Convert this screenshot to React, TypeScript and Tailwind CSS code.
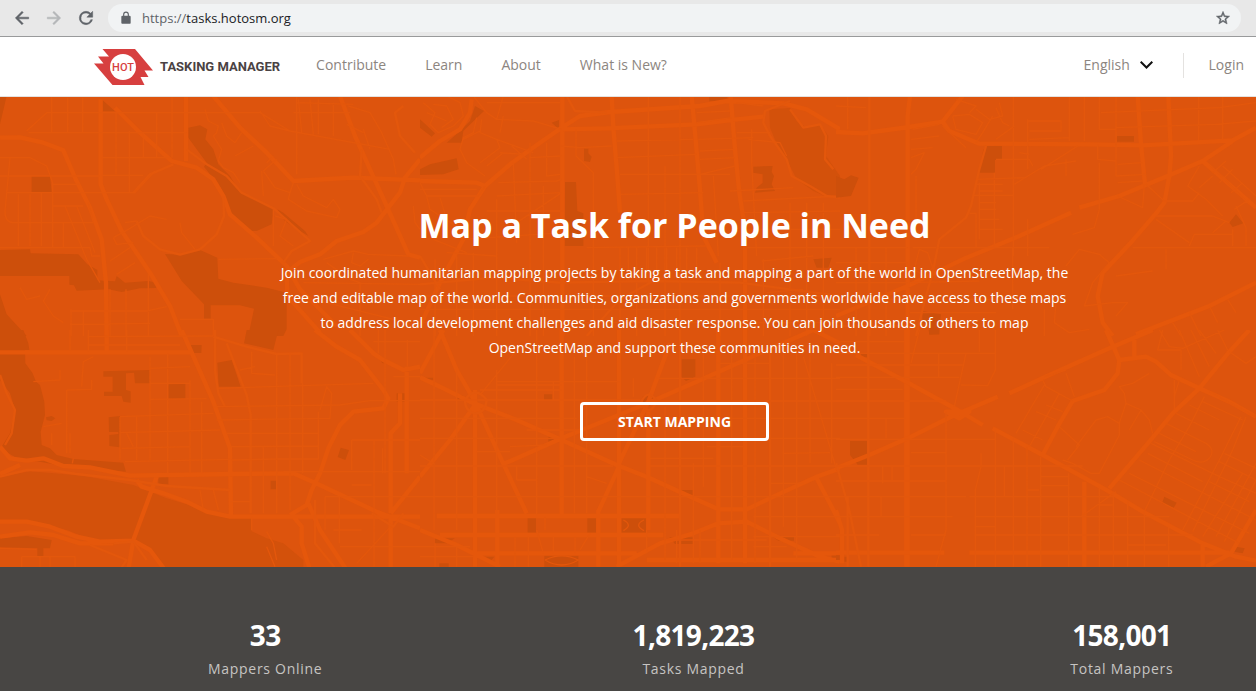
import React from "react";

type RoadSet = { w: number; d: string };
type Tile = { x: number; y: number; areas: string; water?: string; roads: RoadSet[] };

const tiles: Tile[] = [
  {
    x: 0,
    y: -3,
    areas:
      "M305 10L345 46H308ZM95 240H150L155 288H95ZM565 95L600 88L622 100L616 130L640 160L655 205L690 240L720 290L750 300L822 338L815 385L770 405L750 405L690 350L665 280L612 212L620 200L590 160L565 125ZM832 340L850 350L915 405L925 420L895 402L855 375ZM0 462L90 460L92 472L235 475L262 505L292 522V553L345 556L350 540L375 560L445 555L470 560V576L420 577L365 588L325 580L230 584L222 568L208 566V540H0ZM495 474L545 476L595 460L652 485L655 548L700 560L800 575L860 590V700L850 720H745L762 638L720 628H632V668H612V625L545 555ZM0 595L20 655L82 722H0ZM0 0H20L0 85Z",
    roads: [
      { w: 13, d: "M0 125L60 124L130 140L190 163L225 245L270 335L305 430L318 560L320 720M302 10V265L320 310L365 405L450 530L510 630L545 720M345 35L420 110L515 195L590 215L640 250L670 300L690 355L770 425L860 510L900 580L1010 690M640 0L720 95L800 170L880 255L1060 245L1260 253M1020 0L1065 120L1110 220L1160 330L1225 475L1260 485M558 0V195M1260 190L1215 245L1200 290L1130 380L1090 408L1010 435L960 475L900 498L860 530L862 600L960 710" },
      { w: 7, d: "M1085 160L1080 240L1130 310L1145 350M1210 30L1185 50L1200 120L1245 170M400 290L450 235L520 205M410 375L430 420L480 460L540 476L600 460M670 300L672 360L650 415L600 460M560 160L620 205L680 240L725 290L822 338L880 390L930 435L875 465L850 500" },
      { w: 4, d: "M80 105L140 50H780L870 105L1170 160M0 185H90L140 210L158 260V455M0 240H300M30 185L15 345Q15 380 40 380H280M20 290H405L465 225M0 455H270L275 480H300M55 295V450M90 295V450M124 290V450M158 330H250M158 265H240M158 380V455M190 380V455M155 0V110M203 5V110M248 5V110M85 110H560M348 50V235M388 105V290M430 110V185M470 50V185M516 0V185M305 185H510M305 238H430M195 330L260 490L300 560M230 330L285 470M265 320L280 380M340 425L385 400L450 360L500 370M340 425L350 445L400 440M375 380L410 375M330 495L390 455M350 535L405 500M615 40L625 75L655 90L650 110L640 120L665 160L655 195L670 215L700 230L720 260M665 80L680 120L705 140L725 110M705 180L760 150M800 200L820 180M785 225L790 300M790 225L830 190M790 225L825 275L870 290L880 260M870 290L865 310L920 345L1010 365L1020 340L1000 310L980 335L910 300L890 265M890 0V235M780 45L810 90L870 105M895 10L905 110M930 10L940 115M955 10V115M1000 20V120M1045 30L1110 50L1145 110L1180 190L1188 235M1090 100L1110 160M1040 85L1090 110M880 50H1050M890 20L1060 25M540 380L545 410L585 460M825 360L860 370L840 420L880 450M820 340L820 450M210 645H440L500 632M210 685L450 682M213 640V720M330 580V720M378 580V720M445 535V720M250 645V720M150 580L130 615L160 660L190 680M60 575L80 610L120 600M540 670H640V720M900 550L1080 545M970 490L1060 465L1105 475L1225 480M1060 470L1055 500L1080 510L1105 490M655 490L830 488M1240 330L1245 380L1260 400M980 500L1050 550L1080 560V720M910 560L1260 565M940 610L1260 690" },
    ],
  },
  {
    x: 0,
    y: 699,
    areas:
      "M0 0H70L85 40L88 60H75L76 100L98 130L108 155L120 165L133 215L135 255L122 305L125 345L150 355L170 375L220 387L370 398L378 425L200 410L120 395L60 390L25 370L5 350L30 310L45 240L30 190L0 150ZM310 124L450 120V160H405L402 128L378 130V180L392 184V218L370 215L365 198H312V185H338V140H310ZM570 45H605L604 69H574ZM652 98L695 90L722 170H656ZM505 163L556 162V206H505ZM326 262L360 258V352L328 348V315L355 312V306H327ZM138 262L155 258L166 265L155 273L140 271ZM740 0H835L820 60L732 40ZM1022 353L1047 360L1036 390L1013 381ZM475 442L505 440V463H475ZM812 452H830V478H812ZM1144 92A8 8 0 1 0 1160 92A8 8 0 1 0 1144 92ZM1190 190H1220V215H1190ZM0 625L80 618L155 630L150 655H130V680H112V655L0 652Z",
    water:
      "M0 440L90 424L250 437L400 465L500 505L600 535L690 563H754V603L800 625L850 640L910 690V720H500L470 680L410 635L300 640L200 600L100 575L0 570Z",
    roads: [
      { w: 13, d: "M0 67H570M320 0V67M545 0L585 90L640 215L690 355L693 560M0 350L30 385L80 392L130 385L190 408L270 412L390 437L700 432L880 430L945 458L1130 545L1260 595M0 432L60 405M410 450L425 470L490 490L560 515L620 545L690 560H1260M470 440L400 630L385 720M0 575L80 575L150 590L230 620L300 635L400 632L450 660L495 720M0 620L90 607L160 615L240 640L340 640M945 0L1010 50L1080 90L1150 180L1165 205L1150 235L1060 245L1020 285L985 355L960 430L935 480L920 525L870 555M1050 0L1120 70L1150 90L1210 120L1260 110M1220 110V430M1200 190V280L1172 310V550M1172 555V720M1260 440L1172 550M880 560L905 590V640L930 720M925 520L960 600L1020 690L1040 720" },
      { w: 7, d: "M0 135L20 190L45 240L35 310L15 345M645 0V120L655 190L675 230M680 40L740 195L752 255V550M640 20L740 50L830 72L905 70V160M0 440L80 420L150 420L230 432L390 450L500 468L690 480M340 640L400 635L440 690M270 645L380 690L360 720M945 510V640L1010 720M1115 550L1180 590L1210 550" },
      { w: 4, d: "M210 0V60M265 0V65M380 0V65M450 80V390M503 70V430M570 150V430M605 215V430M265 20L640 18M265 45H540M450 115L570 110M450 160H570M450 208L620 206M655 175L1120 160M640 230L1020 225L1110 212H1260M650 270L990 265L995 190L980 170L960 240M680 310H955V245M690 350L955 348M695 390L835 387H955V310M360 260L640 250M360 308L660 300M365 355L570 350M375 395L690 388M360 260V390M410 260V390M830 70V550M870 70V540M908 160V430M790 350V550M755 65V130L825 135M720 120L765 110M200 180L275 178V150M200 180V370M245 170L250 95L280 80M100 155L180 150V120M130 290L185 280M155 310V345M210 310V370M850 425H1260M1055 330H1260M1055 330V420M1122 330V500M1148 355V430M1055 465H1115M975 500H1260M975 500V600M1018 500V640M1122 500V720M1070 700L1172 590M1000 600H1085M1020 650H1260M600 480L610 540M640 480L655 540M690 515H755M755 560V600M800 605L820 640L830 690M800 650L825 710M0 655L110 658M65 680H225V720M65 680V720M120 680V720M150 680V720M1155 0V430M1222 30V110M1120 35H1260M1135 0V70M1180 140H1260M380 310L400 350M220 385L217 400" },
    ],
  },
  {
    x: 1260,
    y: -3,
    areas:
      "M165 30L192 45L130 105L125 140L80 140L120 105L150 75ZM0 220L30 205L110 187L116 220L70 235L0 237ZM395 80L417 72V100ZM492 158H505V172L515 182L510 198L492 195ZM435 258H468L472 345L490 352V450H434ZM1000 212L1058 210L1055 228L1062 240L1055 265L1065 285L1005 290L1010 275L1028 260V235L1000 230ZM868 0H922V16H868ZM1180 490L1235 485L1225 515L1190 515ZM0 70L45 112L35 122L0 95Z",
    water:
      "M1048 40L1110 36L1130 75L1160 95L1200 85L1225 120L1218 180L1260 240V305L1215 300L1180 285L1130 250L1110 210L1075 155L1050 95Z",
    roads: [
      { w: 13, d: "M0 255L170 260L195 270L270 205L360 140L425 95L480 60L570 48L840 30L920 15L1090 22L1160 40L1260 100M425 100L560 97L830 85L950 70L1030 62M427 0V720M575 0L580 95L592 240L600 350M815 0L825 110L840 280L850 420L890 500M932 0L945 160L958 290L975 400V720M0 185L60 135L120 100L150 50L155 10M195 270L150 340L130 430L60 560L0 690" },
      { w: 7, d: "M440 0L465 45L560 50M1110 15L1035 45L1030 80L1050 120L1100 190L1115 240L1170 270L1220 300L1260 305M0 480L60 580M0 565L220 545L420 560L700 555L960 560L1260 600M700 555L600 610L500 720M1110 40L1150 95L1200 85L1218 120L1215 190L1240 220" },
      { w: 4, d: "M10 20L45 50L30 85L55 110L100 90L130 60L120 20L80 0M40 25L80 30L100 70L65 95M20 50L80 75M160 0L200 50L230 70L340 75L425 100M200 20H420M250 0L230 70M240 110L250 60M170 65L160 110L130 125L120 160L140 200L195 240M185 70L180 110L230 130L240 155L180 200M130 130L180 105M230 130L340 170M240 170L310 175M200 210L250 170M275 150L320 190M330 140V720M380 140V240L420 235M468 100V180L520 230V720M330 185L425 180M420 150L480 155L575 150M590 135L820 130M590 185L830 175M600 235H840L945 210M600 295L850 290M685 0V560M735 210V720M780 0V560M830 50L930 45M830 80L935 65M835 130L1000 125M840 165L945 160M840 190L945 185M840 235L930 235M880 240L895 480M930 285L1120 275M995 100V200L1010 480M985 130L1080 140L1100 180M950 20L1030 30M950 110H1050M970 315L1260 300M970 350L1260 345M975 400H1260M975 455H1260M500 455L860 450M600 455V560M625 455V550M650 455V550M680 455V550M710 455V550M740 455V550M770 455V550M800 455V550M830 455V550M0 260L20 300H175L195 270M0 280H170M60 305L80 370L130 410M20 300L30 340L100 385M280 200L290 440M235 260L410 255L425 250M230 300L425 290M200 345H430M290 380L425 290M130 430L430 410M80 470L230 480M40 430L140 470M230 310V720M45 490V720M110 480V720M160 470V720M370 270V720M0 600H1260M0 640H1260M0 680H1260M600 560V720M650 560V720M780 560V720M900 500V720M1030 490V720M1110 320V720M1160 320V720M1210 320V720M1025 495L1180 480M1040 590L1150 580" },
    ],
  },
  {
    x: 1260,
    y: 699,
    areas:
      "M785 88H826V140L798 153L785 142ZM372 193H397V210H372ZM668 200L680 194H695L706 206L698 223L680 230L668 218ZM323 563H348V608H323ZM502 563H528V608H502ZM605 563H678V608H605ZM373 677H475V720H373ZM785 480H820V495L785 490ZM45 625H105L80 640H45ZM168 680H223L210 695ZM1055 618H1122V632H1075ZM748 622H820V642H765ZM0 143H40V150ZM385 320L402 318V338H385ZM112 196H128V210H112ZM58 700H86V712H58ZM1235 675H1260V688H1235Z",
    roads: [
      { w: 13, d: "M0 142L60 170L150 215L290 270L425 330L590 405L680 440L800 495L895 538H980L1060 500L1190 440L1260 415M60 0L110 120L165 215L240 380L320 550M70 0L0 130M165 225L90 330L0 440M255 400L425 325L670 225L830 155L1030 65L1180 0M597 400L685 215L750 40M597 410L535 545M165 180V710M425 0V560M597 0V710M685 240V600M895 0V700M975 0V700M50 558H780M60 615H730M165 670H650M0 600L110 645L240 710M590 710L720 640L820 610L895 580L980 575L1070 620L1200 680L1260 695M680 690H1260M1190 445L1240 540L1260 580M232 540V710M535 540V710M1180 0L1260 40M1120 670H1260" },
      { w: 7, d: "M780 0V710M1050 60V710M135 210Q165 165 200 210Q195 250 165 250Q135 245 135 210M665 213Q685 175 710 213Q700 240 685 240Q665 235 665 213" },
      { w: 4, d: "M42 0V600M110 120V600M230 120V550M350 0V555M375 560V600M463 80V550M500 60V550M735 230V690M820 400V700M850 60V470M935 60V690M1005 80V700M1090 60V590M1150 80L1200 250L1250 420M1130 60V690M1170 60V400M1235 100V400M0 210H660M0 265H470M0 325H420M0 408H580M0 500H890M180 180H425M230 155H600M230 165H425M350 175V210M400 155V210M180 195L290 60M170 365H270M320 300H480M270 350L380 345M290 450H350M290 408V450M710 145H1260M710 213H1260M700 265H1260M690 325H1260M690 385H880M690 408H1260M690 500H1260M860 350H970M890 60H1050M890 100H1050M1090 370L1230 368M1000 560H1260M1000 620H1260M1000 650H1100M640 145V200M350 600L370 670M510 610L480 660M0 650H150M0 680H160M45 640V710M110 650V710M285 620V710M325 620V710M400 620V670M465 620V670M680 600V670M770 600V700M840 600V700M375 690Q425 665 475 690Q425 720 375 690M610 570Q640 585 610 602M672 570Q640 585 672 602M740 630H1040M1050 460H1150M500 440L560 460M0 375L40 400" },
    ],
  },
  {
    x: 2508,
    y: -3,
    areas:
      "M450 150H498V192H477V230H428L442 162ZM843 120H894V137H843ZM1180 380L1200 355L1222 382L1190 393ZM0 240L25 250L45 238L68 245L45 300L0 305ZM258 645L315 655L308 715H280L282 690L260 680Z",
    roads: [
      { w: 13, d: "M0 108L80 112L220 93L320 77L340 105L430 143L760 145L920 148L1190 133L1260 95M222 0L215 60V720M905 0L915 145L927 265M997 0L1005 180L1000 240L985 320L962 350L880 445L800 530L785 600L800 680L830 720M1190 135L1100 195L1000 238L850 300L730 335M705 350L550 420L380 490L215 570L0 660M320 77L380 0M1100 195L1180 265L1260 335M1260 560L1120 630L900 715" },
      { w: 7, d: "M100 0V720M450 150L430 220L405 330L390 365L310 430L290 530L270 600L240 720" },
      { w: 4, d: "M0 30L90 35M35 0V100M225 130L310 120M225 160L290 155M225 185L265 170L240 220L225 235M240 240V380M230 100L310 85M320 90L390 155M350 60L360 100L420 115L440 80L400 55L350 60M360 10L420 30L400 50M470 60L440 110L420 140M420 40L460 70L500 60L490 20M480 35L500 80L520 90M532 0V480M480 130L535 90M575 70V220M575 75H675V105H580M580 130L700 125M700 0V135M745 0V135M790 0V100H840M840 0V240M795 50L1150 35L1260 20M840 95L1140 85L1260 75M1088 0V135M1160 0V130M480 190H580L590 210M550 170L580 175M615 220L725 150M535 265L625 210L720 195M690 190V240M785 145V190L840 195M790 200V340M790 340L775 395L710 415M420 250L570 245M410 298H530M400 352H420V455M430 260V430M475 230V455M420 265H500M430 285H500M430 320H480M430 340H480M430 370H490M430 400H500M840 240L930 235M845 205L920 200M845 260L920 255M845 300L920 335L925 265M930 265L985 315H1070L1090 290M960 360H1130L1180 380M960 370L1060 440M1090 210L1055 270L1110 310L1160 360M1090 275L1130 240M1120 205L1240 325M1160 210L1260 300M1130 230L1170 195M1150 260L1190 220M1185 290L1220 260M1195 340L1240 310M1200 330L1230 395V450M1190 400V450M1130 410L1170 375M1060 450L1075 415H1190M890 455H1260M690 510L730 460L790 475L820 500L770 560L745 630L830 620L875 620L840 660M840 540L950 525M990 460V520M0 455H215M230 455H300M250 460L235 520L265 540L290 515L275 470L250 460M310 455H640M530 455V640M575 370V480M0 500H215M0 560H215M220 560L430 555M0 610H215M220 610H480M220 650H480M0 690H215M60 455V720M150 455V720M1010 680L1035 720M1060 650L1095 720M1120 630L1145 680M1175 610L1200 650M660 620L655 680L700 710L760 700M625 640V720" },
    ],
  },
  {
    x: 2508,
    y: 699,
    areas:
      "M42 333H93V404H65L42 375ZM985 500L1022 518L1013 533L978 520ZM1200 650L1226 655L1220 670L1194 665ZM278 0H310V13L280 14ZM0 676H15V690H0ZM25 680H33V695H25ZM75 70H95V82H75Z",
    roads: [
      { w: 17, d: "M213 0V710" },
      { w: 13, d: "M60 75L210 155L365 240L440 285M470 295L620 375L820 485L920 545L1100 640L1200 680L1260 692M0 415L100 375L215 325L350 258L485 200M520 190L640 135L820 55L950 0M810 0L830 45L850 90L845 130L805 180L710 213L665 290L620 375M850 90L930 80L960 95L1005 135L1090 175L1180 215L1260 260M895 30V80M1240 0L1180 65L1090 175L1010 250L940 335L820 475M1260 540L1185 670M0 668H325M400 668H1180M745 455V710M0 540L18 600V700M1100 640V710M1185 670L1110 710M330 245H400L370 265Z" },
      { w: 7, d: "M97 0V710M0 400L40 540L75 710M35 500V710" },
      { w: 4, d: "M0 35H205M0 70H480M0 105H380M0 142H370M0 178H200M0 213H330M0 265H210M150 265V325M0 328H480M225 368H330M0 408H740M0 453H330M0 500H390M400 500H830M0 560H350M420 560H1000M0 615H130M225 615H330M420 615H1070M250 0L225 100M308 70V140M390 70L355 230M375 165L455 167L478 120V0M430 0V65M330 245V600L300 710M435 370V410L418 480V710M478 300V710M505 410V500M532 325V710M573 350V710M614 380V710M698 430V710M790 470V710M832 485V710M875 515V710M925 545V710M998 590V710M614 440H698M614 467H698M575 480H610M735 560L840 485M790 525H830M875 645H990M420 590H480M140 410V460M168 410V450M135 500V560M620 150L630 170L710 213M625 165L540 310M670 190L580 350M560 300L620 330M600 245L660 270M630 225L680 245M670 290L730 345L695 390M720 350L780 270L815 260L850 280V315L790 430L765 430L710 400L680 390M850 280L870 220L915 240L940 270L950 310M870 220L865 190L850 170L890 160L940 130M915 240L880 300M690 130L715 200M625 140L690 120M980 0L965 60L1035 60V120M970 0L1000 50L1040 55L1165 0M1030 0L1090 140M1065 0L1120 110M1090 0L1140 70M1145 0L1175 60M1180 65L1230 100L1260 80M1015 150V240M1030 150L1015 200M1060 225L1150 270M1020 250L1120 300M1100 215L1220 270M990 280L1110 340Q1140 360 1120 385Q1100 405 1070 390L955 335M1120 185L1260 260M1105 200L1060 290L1000 390L925 545M1215 260L1150 390L1040 600M1230 260L1190 360L1070 605M970 310L1080 365M945 340L1130 430M935 370L1100 455M910 390L1260 570M880 430L1240 610M850 450L1210 640M1165 370L1260 415M1150 395L1260 450M1130 430L1260 490M1120 455L1240 515M1260 400L1140 620M1260 450L1165 635M1220 430L1100 620" },
    ],
  },
];

function MapBackdrop() {
  return (
    <svg
      className="absolute inset-0 h-full w-full"
      viewBox="0 0 3768 1410"
      preserveAspectRatio="xMidYMid slice"
      aria-hidden="true"
    >
      <defs>
        <clipPath id="tile">
          <rect width="1260" height="720" />
        </clipPath>
      </defs>
      {tiles.map((t, i) => (
        <g key={i} transform={`translate(${t.x} ${t.y})`} clipPath="url(#tile)">
          {t.water && <path d={t.water} fill="#d3510b" />}
          <path d={t.areas} fill="#cd4f0b" />
          {t.roads.map((r) => (
            <path
              key={r.w}
              d={r.d}
              fill="none"
              stroke={r.w > 10 ? "#e5570b" : "#e3570c"}
              strokeWidth={r.w}
              strokeLinejoin="round"
            />
          ))}
        </g>
      ))}
    </svg>
  );
}

function BrowserBar() {
  return (
    <div className="flex h-[37px] items-center border-b border-[#999a9b] bg-[#e8e8e8] pr-[15px] pl-[12px] text-[#5f6368]">
      <div className="flex items-center gap-3">
        <button aria-label="Back" className="block">
          <svg
            className="size-5"
            viewBox="0 0 24 24"
            fill="currentColor"
            stroke="currentColor"
            strokeWidth="0.6"
          >
            <path d="M20 11H7.83l5.59-5.59L12 4l-8 8 8 8 1.41-1.41L7.83 13H20v-2z" />
          </svg>
        </button>
        <button aria-label="Forward" className="block text-[#b4b6b8]">
          <svg
            className="size-5"
            viewBox="0 0 24 24"
            fill="currentColor"
            stroke="currentColor"
            strokeWidth="0.6"
          >
            <path d="M12 4l-1.41 1.41L16.17 11H4v2h12.17l-5.58 5.59L12 20l8-8z" />
          </svg>
        </button>
        <button aria-label="Reload" className="block">
          <svg
            className="size-5"
            viewBox="0 0 24 24"
            fill="currentColor"
            stroke="currentColor"
            strokeWidth="0.6"
          >
            <path d="M17.65 6.35A7.96 7.96 0 0 0 12 4a8 8 0 1 0 7.73 10h-2.08A6 6 0 1 1 12 6c1.66 0 3.14.69 4.22 1.78L13 11h7V4l-2.35 2.35z" />
          </svg>
        </button>
      </div>
      <div className="ml-3 flex h-7 flex-1 items-center rounded-full bg-[#f1f3f4] pr-[10px] pl-[11px]">
        <svg className="size-[14px]" viewBox="0 0 24 24" fill="currentColor" aria-hidden="true">
          <path d="M18 8h-1V6A5 5 0 0 0 7 6v2H6a2 2 0 0 0-2 2v10c0 1.100.9 2 2 2h12a2 2 0 0 0 2-2V10a2 2 0 0 0-2-2zM9 6a3 3 0 0 1 6 0v2H9V6z" />
        </svg>
        <label className="ml-[9px] flex flex-1 text-[13px] leading-5">
          <span>https://</span>
          <input
            aria-label="Address"
            className="min-w-0 flex-1 bg-transparent text-[#202124] outline-none"
            defaultValue="tasks.hotosm.org"
          />
        </label>
        <button aria-label="Bookmark this page" className="block">
          <svg
            className="size-4"
            viewBox="0 0 24 24"
            fill="currentColor"
            stroke="currentColor"
            strokeWidth="0.7"
          >
            <path d="M22 9.240l-7.190-.62L12 2 9.190 8.630 2 9.240l5.460 4.730L5.820 21 12 17.270 18.180 21l-1.630-7.030L22 9.240zM12 15.400l-3.760 2.270 1-4.280-3.320-2.880 4.380-.38L12 6.100l1.710 4.040 4.380.38-3.320 2.880 1 4.280L12 15.400z" />
          </svg>
        </button>
      </div>
    </div>
  );
}

function Logo() {
  return (
    <a href="#home" className="flex items-center gap-[7px] text-[#4a4243]">
      <svg className="h-9 w-[59px]" viewBox="0 0 59 36" aria-hidden="true">
        <path
          d="M8.500 0H41L59 21.500H50.500L54.500 28H46.500L50.500 36H18.500L0 14.500H9.500L4 7.500H15Z"
          fill="#d73f3f"
        />
        <circle cx="29" cy="18" r="13" fill="#fff" />
        <text
          x="29"
          y="22"
          textAnchor="middle"
          fill="#d73f3f"
          fontFamily="Roboto, sans-serif"
          fontWeight="500"
          fontSize="11"
        >
          HOT
        </text>
      </svg>
      <span className="font-[Roboto,sans-serif] text-[13px] leading-5 font-bold">TASKING MANAGER</span>
    </a>
  );
}

function Header() {
  return (
    <header className="flex h-[60px] items-center border-b border-[#e4e2e0] bg-white pr-3 pl-[94px] text-sm leading-5 text-[#8c8580]">
      <Logo />
      <nav className="ml-9 flex gap-[39px] pb-[3px]">
        <a href="#contribute">Contribute</a>
        <a href="#learn">Learn</a>
        <a href="#about">About</a>
        <a href="#new">What is New?</a>
      </nav>
      <div className="ml-auto flex items-center pb-[3px]">
        <div className="relative flex items-center">
          <select aria-label="Language" className="cursor-pointer appearance-none bg-transparent pr-[22px]">
            <option>English</option>
          </select>
          <svg
            className="pointer-events-none absolute right-0 h-2 w-[13px]"
            viewBox="0 0 13 8"
            fill="none"
            stroke="#111"
            strokeWidth="2"
            aria-hidden="true"
          >
            <path d="M0.700 0.700L6.500 6.500L12.300 0.700" />
          </svg>
        </div>
        <span className="ml-[30px] h-[25px] w-px bg-[#e4e2e0]" />
        <a href="#login" className="ml-[25px]">
          Login
        </a>
      </div>
    </header>
  );
}

function Hero() {
  return (
    <section className="relative h-[470px] overflow-hidden bg-[#dd540d]">
      <MapBackdrop />
      <div className="relative flex flex-col items-center pt-[104px] pl-[93px] text-center text-white">
        <h1 className="text-[34px] leading-[48px] font-bold">Map a Task for People in Need</h1>
        <p className="mt-[11px] max-w-[800px] text-sm leading-[25px]">
          Join coordinated humanitarian mapping projects by taking a task and mapping a part of the world in
          OpenStreetMap, the free and editable map of the world. Communities, organizations and governments worldwide
          have access to these maps to address local development challenges and aid disaster response. You can join
          thousands of others to map OpenStreetMap and support these communities in need.
        </p>
        <button className="mt-[42px] rounded-[4px] border-3 border-white px-[35px] py-[6px] text-sm leading-[21px] font-bold">
          START MAPPING
        </button>
      </div>
    </section>
  );
}

const stats = [
  { value: "33", label: "Mappers Online" },
  { value: "1,819,223", label: "Tasks Mapped" },
  { value: "158,001", label: "Total Mappers" },
];

function Stats() {
  return (
    <section className="flex-1 overflow-hidden bg-[#484644] pt-[49px] pb-3">
      <dl className="-mr-20 ml-[51px] grid grid-cols-3 text-center">
        {stats.map((s) => (
          <div key={s.label} className="flex flex-col-reverse">
            <dt className="mt-[5px] text-sm leading-5 tracking-wider text-[#c6c4c2]">{s.label}</dt>
            <dd className="text-[28px] leading-[38px] font-bold tracking-tight text-white">{s.value}</dd>
          </div>
        ))}
      </dl>
    </section>
  );
}

export default function App() {
  return (
    <div className="flex min-h-screen flex-col overflow-x-hidden font-['Open_Sans',sans-serif]">
      <BrowserBar />
      <Header />
      <main className="flex flex-1 flex-col">
        <Hero />
        <Stats />
      </main>
    </div>
  );
}
